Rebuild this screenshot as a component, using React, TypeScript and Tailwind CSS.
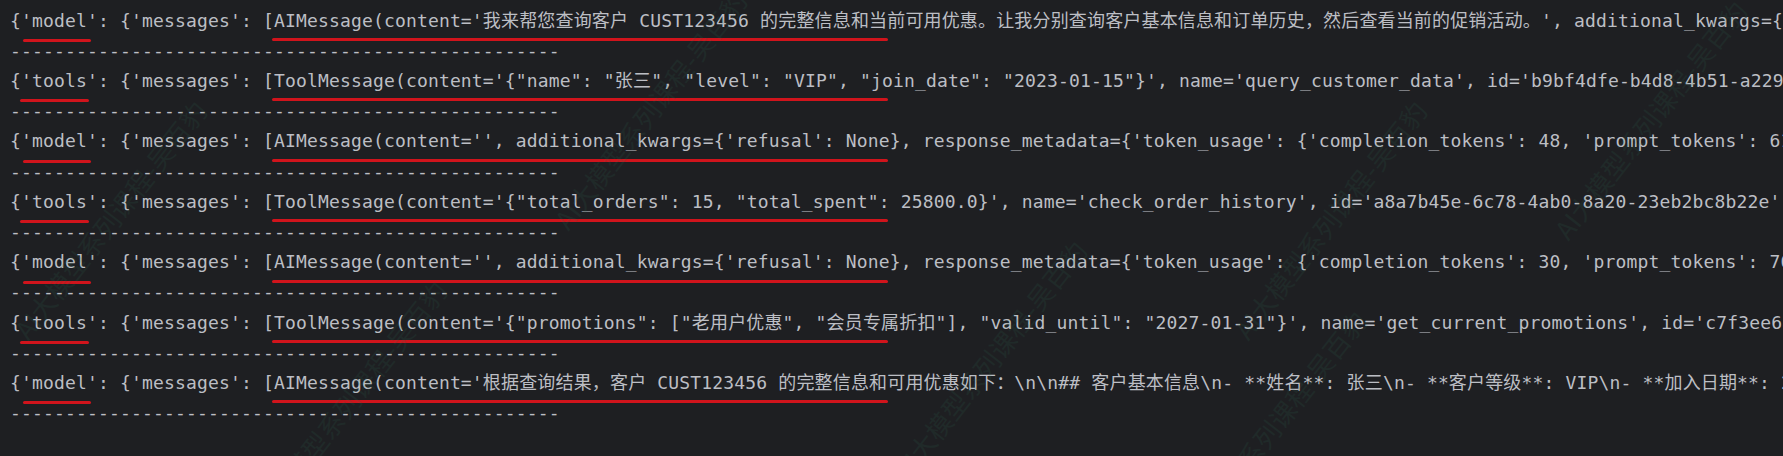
const rows: { key: 'model' | 'tools'; text: string }[] = [
  {
    key: 'model',
    text: "{'model': {'messages': [AIMessage(content='我来帮您查询客户 CUST123456 的完整信息和当前可用优惠。让我分别查询客户基本信息和订单历史，然后查看当前的促销活动。', additional_kwargs={'refusal': None}, response_metadata={'token_usage': {'completion_tokens': 96}})]}}",
  },
  {
    key: 'tools',
    text: "{'tools': {'messages': [ToolMessage(content='{\"name\": \"张三\", \"level\": \"VIP\", \"join_date\": \"2023-01-15\"}', name='query_customer_data', id='b9bf4dfe-b4d8-4b51-a229-5d7c1e0f3a21', tool_call_id='call_0')]}}",
  },
  {
    key: 'model',
    text: "{'model': {'messages': [AIMessage(content='', additional_kwargs={'refusal': None}, response_metadata={'token_usage': {'completion_tokens': 48, 'prompt_tokens': 612}})]}}",
  },
  {
    key: 'tools',
    text: "{'tools': {'messages': [ToolMessage(content='{\"total_orders\": 15, \"total_spent\": 25800.0}', name='check_order_history', id='a8a7b45e-6c78-4ab0-8a20-23eb2bc8b22e', tool_call_id='call_1')]}}",
  },
  {
    key: 'model',
    text: "{'model': {'messages': [AIMessage(content='', additional_kwargs={'refusal': None}, response_metadata={'token_usage': {'completion_tokens': 30, 'prompt_tokens': 702}})]}}",
  },
  {
    key: 'tools',
    text: "{'tools': {'messages': [ToolMessage(content='{\"promotions\": [\"老用户优惠\", \"会员专属折扣\"], \"valid_until\": \"2027-01-31\"}', name='get_current_promotions', id='c7f3ee6a-91d2-4c0b-b5e3-7a1f2d9c4e80')]}}",
  },
  {
    key: 'model',
    text: "{'model': {'messages': [AIMessage(content='根据查询结果，客户 CUST123456 的完整信息和可用优惠如下：\\n\\n## 客户基本信息\\n- **姓名**: 张三\\n- **客户等级**: VIP\\n- **加入日期**: 2023-01-15')]}}",
  },
]

// faint diagonal watermark copies
const marks = [
  { left: 560, top: 10 },
  { left: 1240, top: 120 },
  { left: 1560, top: 20 },
  { left: 260, top: 300 },
  { left: 900, top: 260 },
  { left: 1180, top: 330 },
  { left: 20, top: 120 },
]

export default function App() {
  return (
    <div
      className="relative h-[456px] w-full overflow-hidden bg-[#1e1f22] pt-[5.5px] pl-[10px] text-[18px] leading-[30.2px] tracking-[0.16px] text-[#bcbec4]"
      style={{ fontFamily: '"DejaVu Sans Mono", "Noto Sans CJK SC", monospace' }}
    >
      {rows.map((row, i) => (
        <div key={i} className="relative">
          <div className="overflow-hidden whitespace-pre">{row.text}</div>
          <div className="whitespace-pre">{'-'.repeat(50)}</div>
          <span
            className={
              row.key === 'model'
                ? 'absolute top-[33.5px] left-[13px] h-[3px] w-[68px] rounded-full bg-[#d0141c]'
                : 'absolute top-[33.5px] left-[10px] h-[3px] w-[69px] rounded-full bg-[#d0141c]'
            }
          />
          <span className="absolute top-[32.5px] left-[262px] h-[3px] w-[616px] rounded-full bg-[#d0141c]" />
        </div>
      ))}

      {marks.map((m, i) => (
        <div
          key={i}
          className="pointer-events-none absolute origin-left -rotate-[52deg] whitespace-nowrap text-[26px] tracking-normal text-[#2f6a52] opacity-15"
          style={{ left: m.left, top: m.top + 200, fontFamily: '"Noto Sans CJK SC", sans-serif' }}
        >
          AI大模型系列课程-吴百豹
        </div>
      ))}
    </div>
  )
}
